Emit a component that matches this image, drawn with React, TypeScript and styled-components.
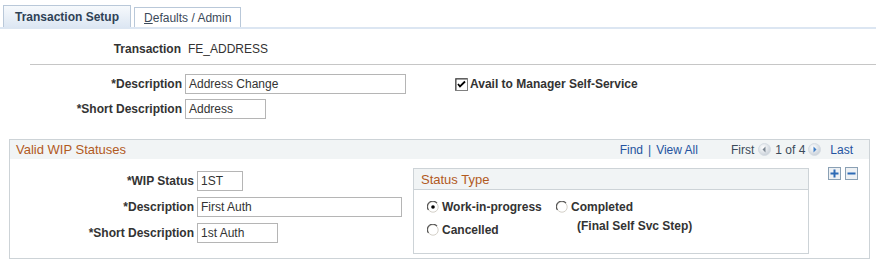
import * as React from 'react'
import styled, { createGlobalStyle } from 'styled-components'

const Global = createGlobalStyle`
  body {
    margin: 0;
    background: #fff;
    font-family: Arial, 'Liberation Sans', sans-serif;
    font-size: 12px;
    color: #333;
  }
`

const Page = styled.div`
  width: 876px;
  height: 263px;
  overflow: hidden;
`

const TabBar = styled.div`
  display: flex;
  align-items: flex-end;
  gap: 3px;
  padding: 5px 0 0 3px;
  border-bottom: 2px solid #dce6f2;
`

const Tab = styled.div<{ $active?: boolean }>`
  height: ${p => (p.$active ? 21 : 19)}px;
  padding: 0 ${p => (p.$active ? 11 : 9)}px;
  display: flex;
  align-items: center;
  border: 1px solid #b9c8d9;
  border-bottom: none;
  background: ${p =>
    p.$active ? 'linear-gradient(#f6f9fc, #dde7f3)' : '#fff'};
  font-weight: ${p => (p.$active ? 'bold' : 'normal')};
  color: ${p => (p.$active ? '#2f4256' : '#3b4a5a')};
  u {
    text-decoration: underline;
  }
`

const FormGrid = styled.div<{ $label: number }>`
  display: grid;
  grid-template-columns: ${p => p.$label}px auto 1fr;
  column-gap: 3px;
  row-gap: 5px;
  align-items: center;
`

const Label = styled.div`
  text-align: right;
  font-weight: bold;
  white-space: nowrap;
`

const Value = styled.div`
  padding-left: 4px;
`

const Input = styled.div<{ $w: number }>`
  width: ${p => p.$w}px;
  height: 20px;
  box-sizing: border-box;
  border: 1px solid #b5b5b5;
  padding: 0 3px;
  display: flex;
  align-items: center;
  background: #fff;
`

const TransactionRow = styled.div`
  margin-top: 13px;
  height: 16px;
`

const Rule = styled.div`
  margin: 6px 0 0 30px;
  border-top: 1px solid #c6c6c6;
`

const TopForm = styled(FormGrid)`
  margin-top: 9px;
`

const CheckLabel = styled.label`
  display: flex;
  align-items: center;
  gap: 2px;
  margin-left: 46px;
  font-weight: bold;
`

const GroupBox = styled.div`
  margin: 20px 0 0 9px;
  width: 861px;
  height: 120px;
  box-sizing: border-box;
  border: 1px solid #cdd3d7;
`

const GroupHeader = styled.div`
  height: 19px;
  background: #f1f4f5;
  display: flex;
  align-items: center;
  padding: 0 16px 0 6px;
`

const GroupTitle = styled.div`
  color: #b25a1e;
  font-size: 13px;
  flex: 1;
`

const Nav = styled.div`
  display: flex;
  align-items: center;
  color: #2453a0;
`

const Muted = styled.span<{ $ml?: number }>`
  color: #3b4a5a;
  margin-left: ${p => p.$ml ?? 0}px;
`

const Sep = styled.span`
  margin: 0 5px;
`

const NavIcon = styled.span<{ $gap: number }>`
  display: inline-flex;
  margin: 0 ${p => p.$gap}px;
`

const NavLink = styled.span<{ $ml?: number }>`
  margin-left: ${p => p.$ml ?? 0}px;
`

const GroupBody = styled.div`
  display: flex;
  align-items: flex-start;
  padding-top: 9px;
`

const LeftForm = styled(FormGrid)`
  width: 403px;
  row-gap: 6px;
  padding-top: 3px;
`

const SubBox = styled.div`
  width: 396px;
  height: 86px;
  box-sizing: border-box;
  border: 1px solid #cdd3d7;
`

const SubHeader = styled.div`
  height: 21px;
  box-sizing: border-box;
  background: #f1f4f5;
  border-bottom: 1px solid #cdd3d7;
  display: flex;
  align-items: center;
  padding-left: 7px;
  color: #b25a1e;
  font-size: 13px;
`

const RadioGrid = styled.div`
  display: grid;
  grid-template-columns: 129px auto;
  row-gap: 8px;
  padding: 9px 0 0 13px;
`

const RadioItem = styled.div`
  display: flex;
  align-items: center;
  gap: 3px;
  font-weight: bold;
  height: 15px;
`

const Note = styled.div`
  font-weight: bold;
  padding-left: 21px;
  margin-top: -3px;
`

const RowButtons = styled.div`
  display: flex;
  gap: 4px;
  margin-left: 19px;
  margin-top: -1px;
`

const Checkbox = () => (
  <svg width="13" height="13" viewBox="0 0 13 13">
    <rect x="0.5" y="0.5" width="12" height="12" fill="#fff" stroke="#808080" />
    <path d="M1 12V1h11" fill="none" stroke="#404040" />
    <path d="M3 6l2 2.5L10 3.5" fill="none" stroke="#000" strokeWidth="1.8" />
  </svg>
)

const Radio = ({ on }: { on?: boolean }) => (
  <svg width="12" height="12" viewBox="0 0 12 12">
    <circle cx="6" cy="6" r="5.2" fill="#fff" stroke="#d4d0c8" />
    <path d="M10 2.2A5.2 5.2 0 0 0 1.5 9" fill="none" stroke="#555" strokeWidth="1.2" />
    {on && <circle cx="6" cy="6" r="1.8" fill="#000" />}
  </svg>
)

const NavArrow = ({ dir }: { dir: 'prev' | 'next' }) => (
  <svg width="13" height="13" viewBox="0 0 13 13">
    <defs>
      <radialGradient id={`g-${dir}`} cx="0.4" cy="0.35" r="0.7">
        <stop offset="0" stopColor="#ffffff" />
        <stop offset="1" stopColor="#c5cdd6" />
      </radialGradient>
    </defs>
    <circle cx="6.5" cy="6.5" r="6" fill={`url(#g-${dir})`} stroke="#d6dce2" />
    {dir === 'prev' ? (
      <path d="M7.5 3.5v6l-3-3z" fill="#7a8591" />
    ) : (
      <path d="M5.5 3.5v6l3-3z" fill="#3f7cc4" />
    )}
  </svg>
)

const SquareButton = ({ plus }: { plus?: boolean }) => (
  <svg width="13" height="13" viewBox="0 0 13 13">
    <rect x="0.5" y="0.5" width="12" height="12" fill="#eef1f4" stroke="#8aa0b4" />
    <rect x="2.5" y="5.5" width="8" height="2" fill="#2d6bb5" />
    {plus && <rect x="5.5" y="2.5" width="2" height="8" fill="#2d6bb5" />}
  </svg>
)

export default function App() {
  return (
    <Page>
      <Global />
      <TabBar>
        <Tab $active>Transaction Setup</Tab>
        <Tab>
          <span>
            <u>D</u>efaults / Admin
          </span>
        </Tab>
      </TabBar>

      <TransactionRow>
        <FormGrid $label={181}>
          <Label>Transaction</Label>
          <Value>FE_ADDRESS</Value>
        </FormGrid>
      </TransactionRow>
      <Rule />

      <TopForm $label={182}>
        <Label>*Description</Label>
        <Input $w={221}>Address Change</Input>
        <CheckLabel>
          <Checkbox />
          Avail to Manager Self-Service
        </CheckLabel>
        <Label>*Short Description</Label>
        <Input $w={81}>Address</Input>
        <div />
      </TopForm>

      <GroupBox>
        <GroupHeader>
          <GroupTitle>Valid WIP Statuses</GroupTitle>
          <Nav>
            <NavLink>Find</NavLink>
            <Sep>|</Sep>
            <NavLink>View All</NavLink>
            <Muted $ml={33}>First</Muted>
            <NavIcon $gap={4}>
              <NavArrow dir="prev" />
            </NavIcon>
            <Muted>1 of 4</Muted>
            <NavIcon $gap={3}>
              <NavArrow dir="next" />
            </NavIcon>
            <NavLink $ml={6}>Last</NavLink>
          </Nav>
        </GroupHeader>
        <GroupBody>
          <LeftForm $label={184}>
            <Label>*WIP Status</Label>
            <Input $w={46}>1ST</Input>
            <div />
            <Label>*Description</Label>
            <Input $w={205}>First Auth</Input>
            <div />
            <Label>*Short Description</Label>
            <Input $w={81}>1st Auth</Input>
            <div />
          </LeftForm>
          <SubBox>
            <SubHeader>Status Type</SubHeader>
            <RadioGrid>
              <RadioItem>
                <Radio on />
                Work-in-progress
              </RadioItem>
              <RadioItem>
                <Radio />
                Completed
              </RadioItem>
              <RadioItem>
                <Radio />
                Cancelled
              </RadioItem>
              <Note>(Final Self Svc Step)</Note>
            </RadioGrid>
          </SubBox>
          <RowButtons>
            <SquareButton plus />
            <SquareButton />
          </RowButtons>
        </GroupBody>
      </GroupBox>
    </Page>
  )
}
